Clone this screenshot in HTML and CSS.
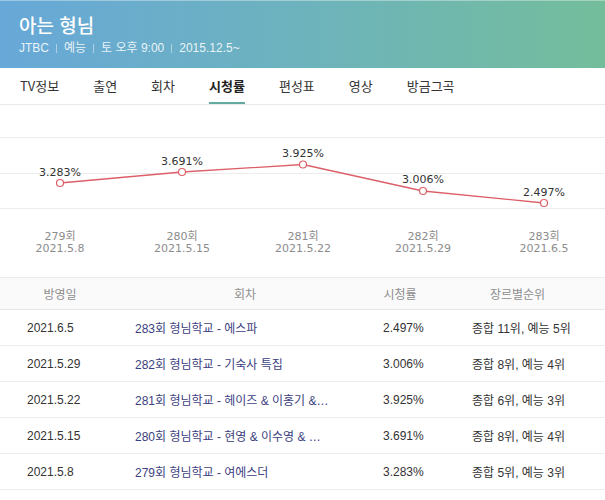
FILE: index.html
```html
<!DOCTYPE html>
<html lang="ko">
<head>
<meta charset="utf-8">
<title>아는 형님 - 시청률</title>
<link rel="stylesheet" href="styles.css">
</head>
<body>
<header class="hero">
  <h1 class="title">아는 형님</h1>
  <div class="meta">
    <span>JTBC</span><i class="sep"></i><span>예능</span><i class="sep"></i><span>토 오후 9:00</span><i class="sep"></i><span>2015.12.5~</span>
  </div>
</header>
<nav class="tabs">
  <a class="tab">TV정보</a>
  <a class="tab">출연</a>
  <a class="tab">회차</a>
  <a class="tab active">시청률</a>
  <a class="tab">편성표</a>
  <a class="tab">영상</a>
  <a class="tab">방금그곡</a>
</nav>
<section class="chart">
  <svg class="chart-svg" width="605" height="172" viewBox="0 0 605 172">
    <g class="grid">
      <line x1="0" y1="32.5" x2="605" y2="32.5"/>
      <line x1="0" y1="68.5" x2="605" y2="68.5"/>
      <line x1="0" y1="103.5" x2="605" y2="103.5"/>
    </g>
    <polyline class="series" points="60,78 182,67 303,59.5 423,86 544,98"/>
    <g class="dots">
      <circle cx="60" cy="78" r="3.5"/>
      <circle cx="182" cy="67" r="3.5"/>
      <circle cx="303" cy="59.5" r="3.5"/>
      <circle cx="423" cy="86" r="3.5"/>
      <circle cx="544" cy="98" r="3.5"/>
    </g>
    <g class="values">
      <text x="60" y="71">3.283%</text>
      <text x="182" y="60">3.691%</text>
      <text x="303" y="52">3.925%</text>
      <text x="423" y="78">3.006%</text>
      <text x="544" y="91">2.497%</text>
    </g>
    <g class="axis">
      <text x="60" y="135">279회</text><text x="60" y="147">2021.5.8</text>
      <text x="182" y="135">280회</text><text x="182" y="147">2021.5.15</text>
      <text x="303" y="135">281회</text><text x="303" y="147">2021.5.22</text>
      <text x="423" y="135">282회</text><text x="423" y="147">2021.5.29</text>
      <text x="544" y="135">283회</text><text x="544" y="147">2021.6.5</text>
    </g>
  </svg>
</section>
<table class="ratings">
  <colgroup>
    <col class="c-date"><col class="c-ep"><col class="c-rate"><col class="c-rank">
  </colgroup>
  <thead>
    <tr><th>방영일</th><th>회차</th><th>시청률</th><th>장르별순위</th></tr>
  </thead>
  <tbody>
    <tr><td class="date">2021.6.5</td><td class="ep">283회 형님학교 - 에스파</td><td class="rate">2.497%</td><td class="rank">종합 11위, 예능 5위</td></tr>
    <tr><td class="date">2021.5.29</td><td class="ep">282회 형님학교 - 기숙사 특집</td><td class="rate">3.006%</td><td class="rank">종합 8위, 예능 4위</td></tr>
    <tr><td class="date">2021.5.22</td><td class="ep">281회 형님학교 - 헤이즈 &amp; 이홍기 &amp;…</td><td class="rate">3.925%</td><td class="rank">종합 6위, 예능 3위</td></tr>
    <tr><td class="date">2021.5.15</td><td class="ep">280회 형님학교 - 현영 &amp; 이수영 &amp; …</td><td class="rate">3.691%</td><td class="rank">종합 8위, 예능 4위</td></tr>
    <tr><td class="date">2021.5.8</td><td class="ep">279회 형님학교 - 여에스더</td><td class="rate">3.283%</td><td class="rank">종합 5위, 예능 3위</td></tr>
  </tbody>
</table>
</body>
</html>
```

FILE: styles.css
```css
* { box-sizing: border-box; }

html, body {
  margin: 0;
  padding: 0;
  background: #fff;
}

body {
  width: 605px;
  font-family: "Noto Sans CJK KR", "Noto Sans", sans-serif;
  color: #333;
}

.hero {
  height: 68px;
  padding: 11px 0 0 19px;
  background: linear-gradient(to right, #67a8d8 0%, #6db3bd 50%, #74bd9b 100%);
  box-shadow: inset 0 1px 0 rgba(255, 255, 255, 0.35);
  color: #fff;
}

.title {
  margin: 0;
  font-size: 19px;
  line-height: 27px;
  font-weight: 500;
  letter-spacing: 0;
}

.meta {
  display: flex;
  align-items: center;
  margin-top: 3px;
  font-family: "Liberation Sans", "Noto Sans CJK KR", sans-serif;
  font-size: 12px;
  line-height: 14px;
  color: rgba(255, 255, 255, 0.88);
}

.sep {
  display: inline-block;
  width: 1px;
  height: 9px;
  margin: 0 7px;
  background: rgba(255, 255, 255, 0.45);
}

.tabs {
  display: flex;
  align-items: stretch;
  gap: 34px;
  height: 37px;
  padding-left: 20px;
  border-bottom: 1px solid #e9e9e9;
}

.tab {
  display: flex;
  align-items: center;
  padding-top: 1px;
  border-bottom: 2px solid transparent;
  font-size: 13px;
  color: #333;
  text-decoration: none;
}

.tab.active {
  font-weight: 700;
  color: #222;
  border-bottom-color: #64ab9f;
}

.chart {
  height: 172px;
}

.chart-svg {
  display: block;
}

.grid line {
  stroke: #ececec;
  stroke-width: 1;
}

.series {
  fill: none;
  stroke: #dc5f68;
  stroke-width: 1.3;
}

.dots circle {
  fill: #fff;
  stroke: #dc5f68;
  stroke-width: 1.2;
}

.values text,
.axis text {
  font-family: "DejaVu Sans", "Noto Sans CJK KR", sans-serif;
  font-size: 11px;
  text-anchor: middle;
}

.values text {
  fill: #333;
}

.axis text {
  fill: #8c8c8c;
}

.ratings {
  width: 605px;
  border-collapse: collapse;
  table-layout: fixed;
  border-top: 1px solid #ececec;
  font-family: "Liberation Sans", "Noto Sans CJK KR", sans-serif;
  font-size: 12px;
}

.c-date { width: 120px; }
.c-ep { width: 250px; }
.c-rate { width: 60px; }
.c-rank { width: 175px; }

.ratings th {
  height: 32px;
  padding: 0;
  background: #fafafa;
  border-bottom: 1px solid #e6e6e6;
  font-weight: 400;
  color: #8e8e8e;
  text-align: center;
}

.ratings td {
  height: 36px;
  padding: 0;
  border-bottom: 1px solid #ececec;
  white-space: nowrap;
  overflow: hidden;
  color: #333;
}

.ratings td.date { padding-left: 27px; }
.ratings td.ep { padding-left: 15px; color: #3b3e80; }
.ratings td.rate { padding-left: 13px; overflow: visible; }
.ratings td.rank { padding-left: 42px; }
```
